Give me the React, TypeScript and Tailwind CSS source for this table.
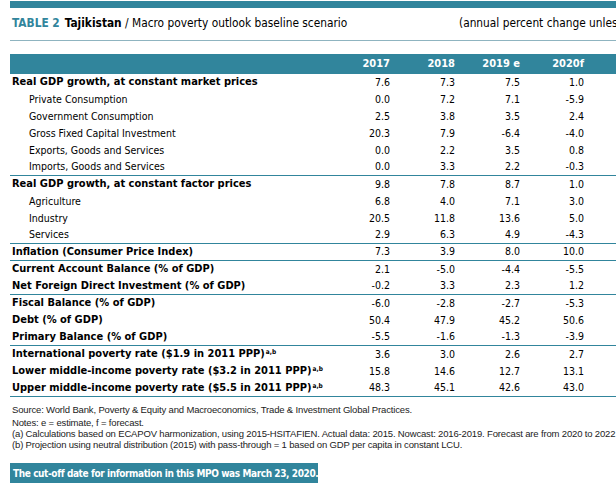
import React from "react";

type Row = {
  label: string;
  sup?: string;
  bold?: boolean;
  values: string[];
  line?: boolean;
};

const rows: Row[] = [
  { label: "Real GDP growth, at constant market prices", bold: true, values: ["7.6", "7.3", "7.5", "1.0"] },
  { label: "Private Consumption", values: ["0.0", "7.2", "7.1", "-5.9"] },
  { label: "Government Consumption", values: ["2.5", "3.8", "3.5", "2.4"] },
  { label: "Gross Fixed Capital Investment", values: ["20.3", "7.9", "-6.4", "-4.0"] },
  { label: "Exports, Goods and Services", values: ["0.0", "2.2", "3.5", "0.8"] },
  { label: "Imports, Goods and Services", values: ["0.0", "3.3", "2.2", "-0.3"], line: true },
  { label: "Real GDP growth, at constant factor prices", bold: true, values: ["9.8", "7.8", "8.7", "1.0"] },
  { label: "Agriculture", values: ["6.8", "4.0", "7.1", "3.0"] },
  { label: "Industry", values: ["20.5", "11.8", "13.6", "5.0"] },
  { label: "Services", values: ["2.9", "6.3", "4.9", "-4.3"], line: true },
  { label: "Inflation (Consumer Price Index)", bold: true, values: ["7.3", "3.9", "8.0", "10.0"], line: true },
  { label: "Current Account Balance (% of GDP)", bold: true, values: ["2.1", "-5.0", "-4.4", "-5.5"] },
  { label: "Net Foreign Direct Investment (% of GDP)", bold: true, values: ["-0.2", "3.3", "2.3", "1.2"], line: true },
  { label: "Fiscal Balance (% of GDP)", bold: true, values: ["-6.0", "-2.8", "-2.7", "-5.3"] },
  { label: "Debt (% of GDP)", bold: true, values: ["50.4", "47.9", "45.2", "50.6"] },
  { label: "Primary Balance (% of GDP)", bold: true, values: ["-5.5", "-1.6", "-1.3", "-3.9"], line: true },
  { label: "International poverty rate ($1.9 in 2011 PPP)", sup: "a,b", bold: true, values: ["3.6", "3.0", "2.6", "2.7"] },
  { label: "Lower middle-income poverty rate ($3.2 in 2011 PPP)", sup: "a,b", bold: true, values: ["15.8", "14.6", "12.7", "13.1"] },
  { label: "Upper middle-income poverty rate ($5.5 in 2011 PPP)", sup: "a,b", bold: true, values: ["48.3", "45.1", "42.6", "43.0"], line: true },
];

const years = ["2017", "2018", "2019 e", "2020f"];
const colW = ["w-[50px]", "w-[65px]", "w-[65px]", "w-[64px]"];

const tahoma = "font-['DejaVu_Sans_Condensed','DejaVu_Sans',sans-serif]";

export default function App() {
  return (
    <div className="relative h-[495px] w-[616px] overflow-hidden bg-white text-black">
      <div className={`ml-[10px] w-[680px] pt-[1px] ${tahoma}`}>
        <div className="h-[7px] bg-[#31859c]" />

        {/* Title */}
        <div className="flex h-[33px] items-center border-b border-[#8fb4c0] text-[11.8px] whitespace-nowrap">
          <span className="w-[449px] shrink-0 pl-[2px]">
            <span className="font-bold text-[#31859c]">TABLE 2</span>
            <span className="ml-[5px] font-bold">Tajikistan</span> / Macro poverty outlook baseline scenario
          </span>
          <span className="shrink-0">(annual percent change unless indicated otherwise)</span>
        </div>

        {/* Header band */}
        <div className="mt-[13px] flex h-[20px] items-center bg-[#31859c] text-[11px] font-bold text-white">
          <div className="w-[330px]" />
          {years.map((y, i) => (
            <div key={y} className={`${colW[i]} text-right`}>
              {y}
            </div>
          ))}
        </div>

        {/* Body */}
        <div className="text-[10.5px]">
          {rows.map((r) => (
            <div
              key={r.label}
              className={`flex h-[17px] items-center whitespace-nowrap ${r.line ? "border-b border-[#31859c]" : ""}`}
            >
              <div className={`w-[330px] ${r.bold ? "pl-[2px] text-[11px] font-bold" : "pl-[19px]"}`}>
                {r.label}
                {r.sup && <sup className="ml-[1px] text-[6.5px] font-bold">{r.sup}</sup>}
              </div>
              {r.values.map((v, i) => (
                <div key={i} className={`${colW[i]} text-right`}>
                  {v}
                </div>
              ))}
            </div>
          ))}
        </div>

        {/* Notes */}
        <div className="mt-[7px] pl-[2px] font-['Liberation_Sans',Arial,sans-serif] text-[9.5px] leading-[11px] tracking-[-0.16px] text-[#222] whitespace-nowrap">
          <p className="mb-[2px]">Source: World Bank, Poverty &amp; Equity and Macroeconomics, Trade &amp; Investment Global Practices.</p>
          <p>Notes: e = estimate, f = forecast.</p>
          <p>(a) Calculations based on ECAPOV harmonization, using 2015-HSITAFIEN. Actual data: 2015. Nowcast: 2016-2019. Forecast are from 2020 to 2022</p>
          <p>(b) Projection using neutral distribution (2015) with pass-through = 1 based on GDP per capita in constant LCU.</p>
        </div>

        <div className="mt-[13px] flex h-[20px] w-[308px] items-center bg-[#31859c] pl-[3px] text-[10px] font-bold tracking-[-0.4px] text-white whitespace-nowrap">
          The cut-off date for information in this MPO was March 23, 2020.
        </div>
      </div>
    </div>
  );
}
